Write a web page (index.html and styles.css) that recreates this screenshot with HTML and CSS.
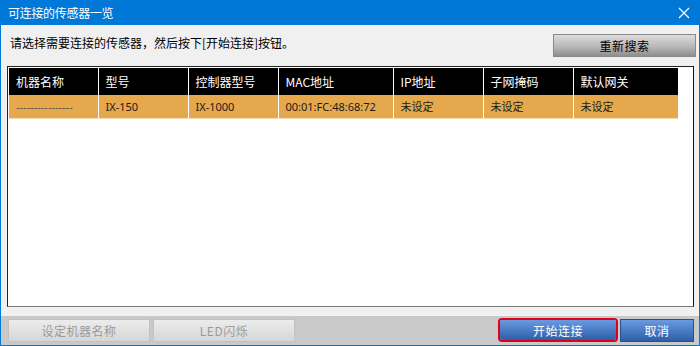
FILE: index.html
```html
<!DOCTYPE html>
<html lang="zh">
<head>
<meta charset="utf-8">
<link rel="stylesheet" href="styles.css">
</head>
<body>
<div class="window">
  <div class="titlebar">
    <span class="title">可连接的传感器一览</span>
    <svg class="close" width="12" height="12" viewBox="0 0 12 12"><path d="M1 1 L11 11 M11 1 L1 11" stroke="#fff" stroke-width="1.2" fill="none"/></svg>
  </div>
  <div class="topbar">
    <span class="hint">请选择需要连接的传感器，然后按下[开始连接]按钮。</span>
    <button class="btn-gray">重新搜索</button>
  </div>
  <div class="listbox">
    <table class="grid">
      <thead>
        <tr>
          <th class="c1">机器名称</th>
          <th class="c2">型号</th>
          <th class="c3">控制器型号</th>
          <th class="c4">MAC地址</th>
          <th class="c5">IP地址</th>
          <th class="c6">子网掩码</th>
          <th class="c7">默认网关</th>
        </tr>
      </thead>
      <tbody>
        <tr class="sel">
          <td>----------------</td>
          <td>IX-150</td>
          <td>IX-1000</td>
          <td>00:01:FC:48:68:72</td>
          <td>未设定</td>
          <td>未设定</td>
          <td>未设定</td>
        </tr>
      </tbody>
    </table>
  </div>
  <div class="footer">
    <button class="btn-dis b1">设定机器名称</button>
    <button class="btn-dis b2">LED闪烁</button>
    <span class="spacer"></span>
    <span class="focus-ring"><button class="btn-blue b3">开始连接</button></span>
    <button class="btn-blue b4">取消</button>
  </div>
</div>
</body>
</html>
```
FILE: styles.css
```css
* { box-sizing: border-box; }
html, body { margin: 0; padding: 0; background: #f0f0f0; }
body { font-family: "Noto Sans CJK SC", "Noto Sans", sans-serif; font-size: 12px; }
.window {
  width: 700px; height: 346px;
  background: #f0f0f0;
  border: 1px solid #0078d7; border-top: none;
  display: flex; flex-direction: column;
}
.titlebar {
  height: 25px; background: #0078d7; color: #fff;
  display: flex; align-items: center; justify-content: space-between;
  padding: 0 10px 0 8px; margin: 0 -1px;
}
.title { font-size: 12px; line-height: 1; letter-spacing: -0.3px; }
.topbar {
  height: 41px; display: flex; align-items: flex-start; justify-content: space-between;
  padding: 0 3px 0 9px;
}
.hint { margin-top: 10px; color: #000; font-size: 12px; line-height: 16px; }
button { font-family: inherit; font-size: 12px; cursor: default; padding: 0; }
.btn-gray {
  margin-top: 9px; width: 143px; height: 23px;
  border: 1px solid #8a8a8a;
  background: linear-gradient(#dcdcdc, #b4b4b4 60%, #8e8e8e);
  color: #000; letter-spacing: 0.5px;
}
.listbox {
  margin: 0 5px 0 6px; height: 241px;
  background: #fff; border: 1px solid #222; border-bottom-color: #777; border-right-color: #111;
  padding: 1px 14px 0 1px;
}
.grid { border-collapse: collapse; width: 669px; table-layout: fixed; }
.grid th, .grid td {
  text-align: left; font-weight: normal; padding: 0 0 0 7px;
  border-left: 1px solid #fff; white-space: nowrap; overflow: hidden;
}
.grid th:first-child, .grid td:first-child { border-left: none; }
.grid th { background: #000; color: #fff; height: 27px; font-size: 12px; }
.grid td {
  background: #e6a84d; color: #1a1a1a; height: 23px; font-size: 11px;
  font-family: "Noto Sans", "Noto Sans CJK SC", sans-serif;
  border-bottom: 1px solid #f6dcb6;
}
.grid td:first-child { color: #555; }
.c1 { width: 89px; } .c2 { width: 90px; } .c3 { width: 90px; }
.c4 { width: 115px; } .c5 { width: 90px; } .c6 { width: 90px; } .c7 { width: 105px; }
.footer {
  margin-top: 9px; flex: 1; background: #c9c9c9;
  display: flex; align-items: flex-start; padding: 3px 5px 0 7px;
}
.btn-dis {
  height: 23px; width: 142px; border: 1px solid #c2c2c2;
  background: linear-gradient(#ececec, #d6d6d6);
  color: #9a9a9a; letter-spacing: 0.5px;
}
.b2 { margin-left: 3px; }
.spacer { flex: 1; }
.focus-ring {
  margin-top: -1px;
  border: 2px solid #e0001a; border-radius: 4px; height: 24px; width: 120px;
  display: flex; overflow: hidden;
}
.btn-blue {
  height: 23px; border: 1px solid #2a4f8a;
  background: linear-gradient(#6a9be0, #4a7cc6 50%, #2f5ea8);
  color: #fff; letter-spacing: 0.5px;
}
.b3 { width: 116px; height: 20px; border: none; }
.b4 { width: 74px; margin-left: 2px; }
```
